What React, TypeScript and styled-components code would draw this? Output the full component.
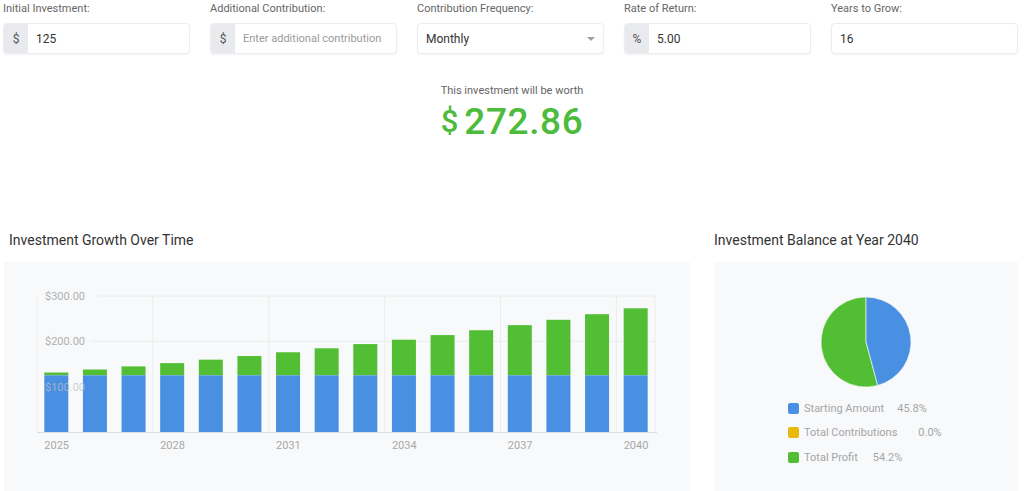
import React from "react";
import styled, { createGlobalStyle } from "styled-components";

const GlobalStyle = createGlobalStyle`
  html, body { margin: 0; padding: 0; background: #ffffff; }
  body { font-family: Roboto, "Liberation Sans", Arial, sans-serif; color: #333; }
  * { box-sizing: border-box; }
`;

const Page = styled.div`
  width: 1024px;
`;

const FormRow = styled.div`
  display: grid;
  grid-template-columns: repeat(5, 1fr);
  column-gap: 20px;
  padding: 1px 6px 0 3px;
`;

const Field = styled.div`
  display: flex;
  flex-direction: column;
`;

const Label = styled.label`
  font-size: 11px;
  line-height: 16px;
  color: #666;
  margin-bottom: 6px;
`;

const InputBox = styled.div`
  display: flex;
  align-items: stretch;
  height: 31px;
  border: 1px solid #ededed;
  border-radius: 4px;
  background: #fff;
  box-shadow: 0 1px 2px rgba(0, 0, 0, 0.05);
  overflow: hidden;
  position: relative;
`;

const Addon = styled.span`
  width: 24px;
  flex: 0 0 24px;
  display: flex;
  align-items: center;
  justify-content: center;
  background: #e9eaed;
  color: #555;
  font-size: 12px;
`;

const Value = styled.span<{ $placeholder?: boolean }>`
  flex: 1;
  display: flex;
  align-items: center;
  padding-left: 8px;
  font-size: ${(p) => (p.$placeholder ? "11px" : "12px")};
  color: ${(p) => (p.$placeholder ? "#9a9a9a" : "#333")};
`;

const Caret = styled.span`
  position: absolute;
  right: 8px;
  top: 13px;
  width: 0;
  height: 0;
  border-left: 4px solid transparent;
  border-right: 4px solid transparent;
  border-top: 4px solid #a0a0a0;
`;

const Result = styled.div`
  margin-top: 30px;
  display: flex;
  flex-direction: column;
  align-items: center;
`;

const ResultLabel = styled.div`
  font-size: 11px;
  line-height: 14px;
  color: #666;
`;

const ResultValue = styled.div`
  margin-top: 2px;
  display: flex;
  align-items: center;
  gap: 6px;
  height: 44px;
  color: #4dbb3c;
  font-weight: 500;
`;

const Dollar = styled.span`
  font-size: 31px;
  line-height: 44px;
`;

const Amount = styled.span`
  font-size: 37px;
  line-height: 44px;
  letter-spacing: 0.6px;
`;

const ChartsRow = styled.div`
  margin-top: 88px;
  display: grid;
  grid-template-columns: 686px 1fr;
  column-gap: 24px;
  padding: 0 6px 0 4px;
`;

const ChartColumn = styled.div`
  display: flex;
  flex-direction: column;
`;

const ChartTitle = styled.h3<{ $indent?: number }>`
  margin: 0 0 14px 0;
  padding-left: ${(p) => p.$indent ?? 0}px;
  font-size: 14px;
  line-height: 16px;
  font-weight: 400;
  color: #333;
`;

const Panel = styled.div`
  background: #f8f9fa;
  height: 240px;
`;

const PiePanel = styled(Panel)`
  display: flex;
  flex-direction: column;
  align-items: center;
  padding-top: 34px;
`;

const Legend = styled.div`
  align-self: stretch;
  margin-top: 14px;
  padding-left: 74px;
  display: flex;
  flex-direction: column;
  gap: 12px;
`;

const LegendRow = styled.div`
  display: flex;
  align-items: center;
  height: 12.5px;
  font-size: 11px;
  color: #a5a5a5;
`;

const Swatch = styled.span<{ $color: string }>`
  width: 11px;
  height: 11px;
  border-radius: 2px;
  background: ${(p) => p.$color};
  margin-right: 5px;
`;

const Pct = styled.span<{ $gap: number }>`
  margin-left: ${(p) => p.$gap}px;
`;

const BLUE = "#4a90e2";
const GREEN = "#52be34";
const YELLOW = "#e9b90a";

const fields = [
  { label: "Initial Investment:", addon: "$", value: "125" },
  { label: "Additional Contribution:", addon: "$", value: "Enter additional contribution", placeholder: true },
  { label: "Contribution Frequency:", value: "Monthly", select: true },
  { label: "Rate of Return:", addon: "%", value: "5.00" },
  { label: "Years to Grow:", value: "16" },
];

function BarChart() {
  const left = 33;
  const right = 651;
  const top = 34;
  const base = 170;
  const scale = (base - top) / 300;
  const cat = (right - left) / 16;
  const values = Array.from({ length: 16 }, (_, i) => 125 * Math.pow(1.05, i + 1));
  const vLines = [0, 3, 6, 9, 12, 15, 16];
  const yTicks = [300, 200];
  return (
    <svg width="686" height="240" viewBox="0 0 686 240">
      {vLines.map((k) => (
        <line key={k} x1={left + k * cat} x2={left + k * cat} y1={top} y2={base} stroke="#ececec" strokeWidth="1" />
      ))}
      {yTicks.map((t) => (
        <line key={t} x1={t === 300 ? 93 : 86} x2={right} y1={base - t * scale} y2={base - t * scale} stroke="#ececec" strokeWidth="1" />
      ))}
      {values.map((v, i) => {
        const x = left + i * cat + 7.3;
        const hb = 125 * scale;
        const ht = v * scale;
        return (
          <g key={i}>
            <rect x={x} y={base - ht} width={24} height={ht - hb} fill={GREEN} />
            <rect x={x} y={base - hb} width={24} height={hb} fill={BLUE} />
          </g>
        );
      })}
      <line x1={left} x2={right + 2} y1={base + 0.5} y2={base + 0.5} stroke="#dcdcdc" strokeWidth="1" />
      {[300, 200, 100].map((t) => (
        <text
          key={t}
          x={41}
          y={base - t * scale + 4}
          fontSize="11"
          fill={t === 100 ? "rgba(190,190,190,0.75)" : "#b0b0b0"}
          fontFamily="Roboto, 'Liberation Sans', sans-serif"
        >
          ${t}.00
        </text>
      ))}
      {[0, 3, 6, 9, 12, 15].map((i) => (
        <text
          key={i}
          x={left + i * cat + 7.3}
          y={187}
          fontSize="11"
          fill="#a8a8a8"
          fontFamily="Roboto, 'Liberation Sans', sans-serif"
        >
          {2025 + i}
        </text>
      ))}
    </svg>
  );
}

function PieChart() {
  const r = 45;
  const c = 46;
  const frac = 0.458;
  const a = -Math.PI / 2 + frac * 2 * Math.PI;
  const ex = c + r * Math.cos(a);
  const ey = c + r * Math.sin(a);
  const blue = `M ${c} ${c} L ${c} ${c - r} A ${r} ${r} 0 0 1 ${ex} ${ey} Z`;
  const green = `M ${c} ${c} L ${ex} ${ey} A ${r} ${r} 0 1 1 ${c} ${c - r} Z`;
  return (
    <svg width="92" height="92" viewBox="0 0 92 92">
      <path d={green} fill={GREEN} stroke="#ffffff" strokeWidth="0.6" />
      <path d={blue} fill={BLUE} stroke="#ffffff" strokeWidth="0.6" />
    </svg>
  );
}

export default function App() {
  return (
    <Page>
      <GlobalStyle />
      <FormRow>
        {fields.map((f) => (
          <Field key={f.label}>
            <Label>{f.label}</Label>
            <InputBox>
              {f.addon && <Addon>{f.addon}</Addon>}
              <Value $placeholder={f.placeholder}>{f.value}</Value>
              {f.select && <Caret />}
            </InputBox>
          </Field>
        ))}
      </FormRow>

      <Result>
        <ResultLabel>This investment will be worth</ResultLabel>
        <ResultValue>
          <Dollar>$</Dollar>
          <Amount>272.86</Amount>
        </ResultValue>
      </Result>

      <ChartsRow>
        <ChartColumn>
          <ChartTitle $indent={5}>Investment Growth Over Time</ChartTitle>
          <Panel>
            <BarChart />
          </Panel>
        </ChartColumn>
        <ChartColumn>
          <ChartTitle>Investment Balance at Year 2040</ChartTitle>
          <PiePanel>
            <PieChart />
            <Legend>
              <LegendRow>
                <Swatch $color={BLUE} />
                Starting Amount
                <Pct $gap={13}>45.8%</Pct>
              </LegendRow>
              <LegendRow>
                <Swatch $color={YELLOW} />
                Total Contributions
                <Pct $gap={21}>0.0%</Pct>
              </LegendRow>
              <LegendRow>
                <Swatch $color={GREEN} />
                Total Profit
                <Pct $gap={15}>54.2%</Pct>
              </LegendRow>
            </Legend>
          </PiePanel>
        </ChartColumn>
      </ChartsRow>
    </Page>
  );
}
